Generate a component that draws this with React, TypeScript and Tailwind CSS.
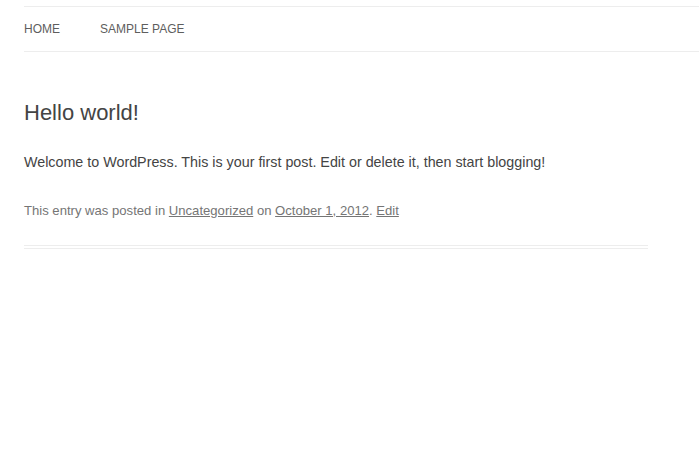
const navItems = ['HOME', 'SAMPLE PAGE'];

export default function App() {
  return (
    <div
      className="min-h-[464px] bg-white pl-6 text-[#444]"
      style={{ fontFamily: '"Liberation Sans", Arial, sans-serif' }}
    >
      {/* Main nav */}
      <nav className="mt-[6px] border-y border-[#ededed]">
        <ul className="flex">
          {navItems.map((item) => (
            <li key={item} className="mr-10 text-[12px] leading-[44px] text-[#5e5e5e]">
              {item}
            </li>
          ))}
        </ul>
      </nav>

      {/* Post */}
      <article className="mt-[47px] w-[624px] border-b-4 border-double border-[#ededed] pb-[22px]">
        <h1 className="text-[22px] leading-[28.6px] font-normal text-[#444]">Hello world!</h1>
        <p className="mt-[22px] text-[14.3px] leading-6">
          Welcome to WordPress. This is your first post. Edit or delete it, then start blogging!
        </p>
        <footer className="mt-[25px] text-[13.1px] leading-6 text-[#757575]">
          This entry was posted in <a className="underline">Uncategorized</a> on{' '}
          <a className="underline">October 1, 2012</a>. <a className="underline">Edit</a>
        </footer>
      </article>
    </div>
  );
}
